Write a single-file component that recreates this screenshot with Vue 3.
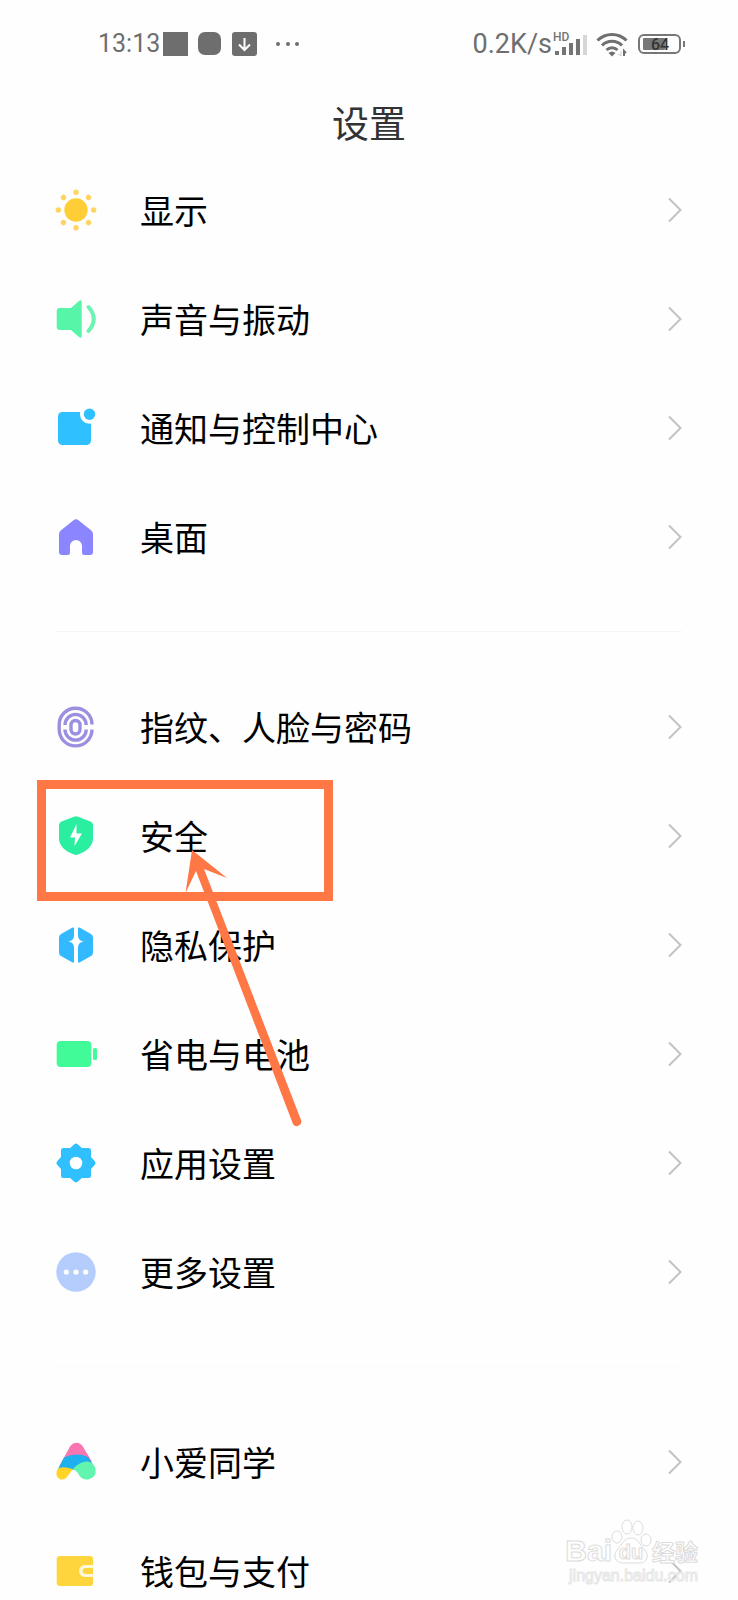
<template>
  <div class="screen">
    <header class="status-bar">
      <div class="status-left">
        <span class="clock">13:13</span>
        <svg class="notifications" width="136" height="26" viewBox="0 0 136 26" fill="#6e6e6e" aria-hidden="true">
          <rect x="0" y="1" width="25" height="24" />
          <rect x="35" y="1" width="23" height="23" rx="7" />
          <rect x="69" y="1" width="25" height="24" rx="3" />
          <path d="M81.500 7v11M76 13.500l5.500 5.500 5.500-5.500" fill="none" stroke="#fff" stroke-width="2" />
          <circle cx="115" cy="13" r="2" />
          <circle cx="125" cy="13" r="2" />
          <circle cx="134" cy="13" r="2" />
        </svg>
      </div>
      <div class="status-right">
        <span class="speed">0.2K/s</span>
        <svg class="signal" width="36" height="32" viewBox="0 0 36 32" fill="#747474" aria-hidden="true">
          <text x="1" y="13" class="hd">HD</text>
          <rect x="3" y="23" width="4" height="4" />
          <rect x="10" y="19" width="4" height="8" />
          <rect x="17" y="15" width="4" height="12" />
          <rect x="24" y="11" width="4" height="16" />
          <rect x="31" y="7" width="4" height="20" fill="#d6d6d6" />
        </svg>
        <svg class="wifi" width="32" height="26" viewBox="0 0 32 26" fill="none" stroke="#707070" stroke-width="3" aria-hidden="true">
          <path d="M1.500 9.500a20.500 20.500 0 0 1 29 0" />
          <path d="M6 14.500a14 14 0 0 1 20 0" />
          <path d="M10.500 19a8 8 0 0 1 11 0" />
          <path d="M12.500 22q3.500-3 7 0l-3.500 3.500z" fill="#707070" stroke="none" />
          <path d="M25 20v5l-3-2" stroke="#ccc" stroke-width="1" />
          <path d="M28 25v-5l2 2" stroke-width="2" />
        </svg>
        <svg class="battery" width="48" height="22" viewBox="0 0 48 22" aria-hidden="true">
          <rect x="1" y="2" width="41" height="18" rx="5" fill="none" stroke="#777" stroke-width="2" />
          <rect x="5" y="5" width="22" height="12" rx="1" fill="#777" />
          <path d="M46 8v6" stroke="#777" stroke-width="2" />
          <text x="22" y="17" class="level">64</text>
        </svg>
      </div>
    </header>

    <h1 class="title">设置</h1>

    <nav class="settings">
      <ul v-for="(group, index) in groups" :key="index" class="group">
        <li v-for="item in group" :key="item.id" class="item">
          <a href="#" class="row" @click.prevent>
            <svg class="icon" viewBox="0 0 40 40" aria-hidden="true">
              <g v-if="item.id === 'display'" fill="#ffd463">
                <circle cx="20" cy="20" r="11.700" fill="#ffcd35" />
                <circle v-for="n in 8" :key="n" cx="20" cy="2.300" r="2.700" :transform="`rotate(${n * 45} 20 20)`" />
              </g>
              <g v-else-if="item.id === 'sound'" fill="#56f5a8">
                <path d="M4 9h11L23 2q2.700-2 2.700 1.500v33q0 3.500-2.700 1.500l-8-7H4q-3.300 0-3.300-3.300V12.300Q.7 9 4 9z" />
                <path d="M32.500 8q10.500 12 0 24" fill="none" stroke="#6df3b4" stroke-width="4" stroke-linecap="round" />
              </g>
              <g v-else-if="item.id === 'notification'" fill="#2fc0ff">
                <rect x="2" y="4" width="33" height="33" rx="4.500" />
                <circle cx="33.500" cy="6.300" r="9.500" fill="#fff" />
                <circle cx="33.500" cy="6.300" r="5.700" />
              </g>
              <path
                v-else-if="item.id === 'home'"
                fill="#8b85ff"
                d="M17.500 3.200q2.500-1.800 5 0l12.500 10q2 1.600 2 4V35q0 3-3 3h-5.500q-2.500 0-2.500-2.500V29a6 6 0 0 0-12 0v6.500Q14 38 11.500 38H6q-3 0-3-3V17.200q0-2.400 2-4z"
              />
              <g v-else-if="item.id === 'biometric'" fill="none" stroke="#9b90e0" stroke-width="3.400">
                <path d="M36 17.500A16.300 16.300 0 0 0 19.500 1.200 16.300 16.300 0 0 0 3.200 17.500v5a16.300 16.300 0 0 0 32.800 0" />
                <path d="M9 18a10.600 10.600 0 0 1 21.200 0M9 22.500a10.600 10.600 0 0 0 21.200 0" />
                <rect x="15" y="13.500" width="9" height="13.500" rx="4.500" />
              </g>
              <g v-else-if="item.id === 'security'">
                <path d="M18 .8q2-.9 4 0l12.500 4.700Q37 6.500 37 9v13q0 11-15 16.500-2 .8-4 0Q3 33 3 22V9q0-2.500 2.500-3.500z" fill="#2aefa0" />
                <path d="M20.500 8L14 21.500h5L18.500 30 26 17.500h-5.500z" fill="#fff" />
              </g>
              <g v-else-if="item.id === 'privacy'" fill="#33b9ff">
                <path d="M18 3.500v7q0 5-5.500 6 5.500 1 5.500 6v14q0 1.500-1.500 1L5 31q-2-1-2-3.500v-15Q3 10 5 9l11.500-6.500q1.500-.5 1.500 1z" />
                <path d="M22 3.500v7q0 5 5.500 6-5.500 1-5.500 6v14q0 1.500 1.500 1L35 31q2-1 2-3.500v-15Q37 10 35 9L23.500 2.500q-1.500-.5-1.500 1z" />
              </g>
              <g v-else-if="item.id === 'power'" fill="#40fb98">
                <rect x=".7" y="7" width="34.600" height="26" rx="4" />
                <rect x="37" y="14" width="4" height="12" rx="1.500" />
              </g>
              <g v-else-if="item.id === 'apps'">
                <path
                  d="M20 3l5 4.500h7.500V15L37 20l-4.500 5v7.500H25L20 37l-5-4.500H7.500V25L3 20l4.500-5V7.500H15z"
                  fill="#30bfff"
                  stroke="#30bfff"
                  stroke-width="5"
                  stroke-linejoin="round"
                />
                <circle cx="20" cy="20" r="6.300" fill="#fff" />
              </g>
              <g v-else-if="item.id === 'more'" fill="#fff">
                <circle cx="20" cy="20" r="19.700" fill="#b5cdfd" />
                <circle cx="10.300" cy="20" r="2.600" />
                <circle cx="20" cy="20" r="2.600" />
                <circle cx="29.700" cy="20" r="2.600" />
              </g>
              <g v-else-if="item.id === 'xiaoai'">
                <path d="M20.500.7q4 0 6.500 4l9 15-16 2-17 3L14 4.500Q16.500.7 20.500.7z" fill="#fb76b0" />
                <path d="M8 15.500q12-5.500 24-.5l6 9-17 4-19-1z" fill="#1fb0f0" />
                <path d="M1.500 27Q5 24.500 10 25.500l7 1.500-6.500 8.500q-3 3-7 1.500-5-3-2-10z" fill="#ffd426" />
                <path d="M17 27q7-8 14.500-7.500 5.500.5 8 7 1.500 9-7.500 11-6 .5-9-4.500-2-4-6-6z" fill="#62f5b0" />
              </g>
              <g v-else fill="#ffd53d">
                <rect x=".7" y="5" width="36.300" height="30" rx="3" />
                <path d="M38 14h-9a6 6 0 0 0 0 12h9v-3h-8q-3.500 0-3.500-3t3.500-3h8z" fill="#fff8d8" />
              </g>
            </svg>
            <span class="label">{{ item.label }}</span>
            <svg class="chevron" viewBox="0 0 14 26" aria-hidden="true">
              <path d="M1 1.500L12.500 13 1 24.500" />
            </svg>
          </a>
          <div v-if="item.id === 'security'" class="highlight"></div>
          <svg v-if="item.id === 'security'" class="arrow" viewBox="0 0 130 290" aria-hidden="true">
            <path d="M12 7L47 35 24 26l97 251a4.500 4.500 0 0 1-8 4L16 28 5.500 50z" />
          </svg>
        </li>
      </ul>
    </nav>

    <div class="watermark">
      <div class="brand">
        <span class="brand-latin">Bai</span>
        <svg class="paw" width="40" height="46" viewBox="0 0 40 46" aria-hidden="true">
          <ellipse cx="5" cy="18" rx="5" ry="6" />
          <ellipse cx="15" cy="8" rx="5" ry="7" />
          <ellipse cx="26" cy="9" rx="5" ry="7" />
          <ellipse cx="34" cy="21" rx="5" ry="6" />
          <path d="M19 19c7 0 9 7 13 11 6 6 3 14-4 14H11c-8 0-11-8-5-14 4-4 6-11 13-11z" />
          <text x="19" y="40">du</text>
        </svg>
        <span class="brand-han">经验</span>
      </div>
      <span class="site">jingyan.baidu.com</span>
    </div>
  </div>
</template>

<script setup>
const groups = [
  [
    { id: "display", label: "显示" },
    { id: "sound", label: "声音与振动" },
    { id: "notification", label: "通知与控制中心" },
    { id: "home", label: "桌面" },
  ],
  [
    { id: "biometric", label: "指纹、人脸与密码" },
    { id: "security", label: "安全" },
    { id: "privacy", label: "隐私保护" },
    { id: "power", label: "省电与电池" },
    { id: "apps", label: "应用设置" },
    { id: "more", label: "更多设置" },
  ],
  [
    { id: "xiaoai", label: "小爱同学" },
    { id: "wallet", label: "钱包与支付" },
  ],
];
</script>

<style>
body {
  background: #fefefe;
}
</style>

<style scoped>
.screen {
  position: relative;
  height: 100vh;
  overflow: hidden;
  background: #fefefe;
  font-family: "Noto Sans CJK SC", sans-serif;
}

.status-bar {
  display: flex;
  align-items: center;
  justify-content: space-between;
  height: 88px;
  padding: 0 52px 4px 98px;
  color: #6e6e6e;
  font-family: Roboto, sans-serif;
}

.status-left,
.status-right {
  display: flex;
  align-items: center;
}

.status-left {
  gap: 3px;
}

.clock,
.speed {
  line-height: 32px;
}

.clock {
  font-size: 25px;
}

.speed {
  font-size: 27px;
}

.hd {
  font-size: 12px;
  font-weight: 500;
}

.wifi {
  margin: 0 10px 0 8px;
}

.level {
  font-size: 16px;
  font-weight: 500;
  text-anchor: middle;
  fill: #333;
}

.title {
  margin: 0;
  padding-bottom: 4px;
  color: #333;
  font-size: 37px;
  font-weight: 400;
  line-height: 60px;
  text-align: center;
}

.group {
  margin: 0;
  padding: 0;
  list-style: none;
}

.group + .group::before {
  content: "";
  display: block;
  height: 1px;
  margin: 40px 56px;
  background: #f6f6f6;
}

.group:last-child::before {
  background: #fbfbfb;
}

.settings {
  margin-top: -1px;
}

.item {
  position: relative;
}

.row {
  display: flex;
  align-items: center;
  height: 109px;
  padding: 0 56px;
  color: #000;
  text-decoration: none;
}

.icon {
  flex: none;
  width: 40px;
  height: 40px;
  margin-right: 44px;
  overflow: visible;
}

.label {
  flex: 1;
  font-size: 34px;
  line-height: 48px;
}

.chevron {
  width: 14px;
  height: 26px;
  fill: none;
  stroke: #c2c2c2;
  stroke-width: 2;
}

.highlight {
  position: absolute;
  top: -1px;
  left: 37px;
  box-sizing: border-box;
  width: 296px;
  height: 121px;
  border: 9px solid #ff7745;
}

.arrow {
  position: absolute;
  z-index: 1;
  top: 62px;
  left: 180px;
  width: 130px;
  height: 290px;
  fill: #ff7745;
  pointer-events: none;
}

.watermark {
  position: absolute;
  right: 40px;
  bottom: 13px;
  display: flex;
  flex-direction: column;
  align-items: flex-end;
  color: #fff;
  -webkit-text-stroke: 1px #dcdcdc;
}

.brand {
  display: flex;
  align-items: flex-end;
}

.brand-latin {
  font-family: "Liberation Sans", sans-serif;
  font-size: 30px;
  font-weight: 700;
  line-height: 28px;
}

.brand-han {
  font-size: 23px;
  font-weight: 700;
  line-height: 28px;
}

.paw {
  overflow: visible;
  fill: #fff;
  stroke: #dcdcdc;
}

.paw text {
  font-family: "Liberation Sans", sans-serif;
  font-size: 20px;
  font-weight: 700;
  text-anchor: middle;
}

.site {
  font-family: "Liberation Sans", sans-serif;
  font-size: 16px;
  line-height: 22px;
  -webkit-text-stroke-color: #e6e6e6;
}
</style>
